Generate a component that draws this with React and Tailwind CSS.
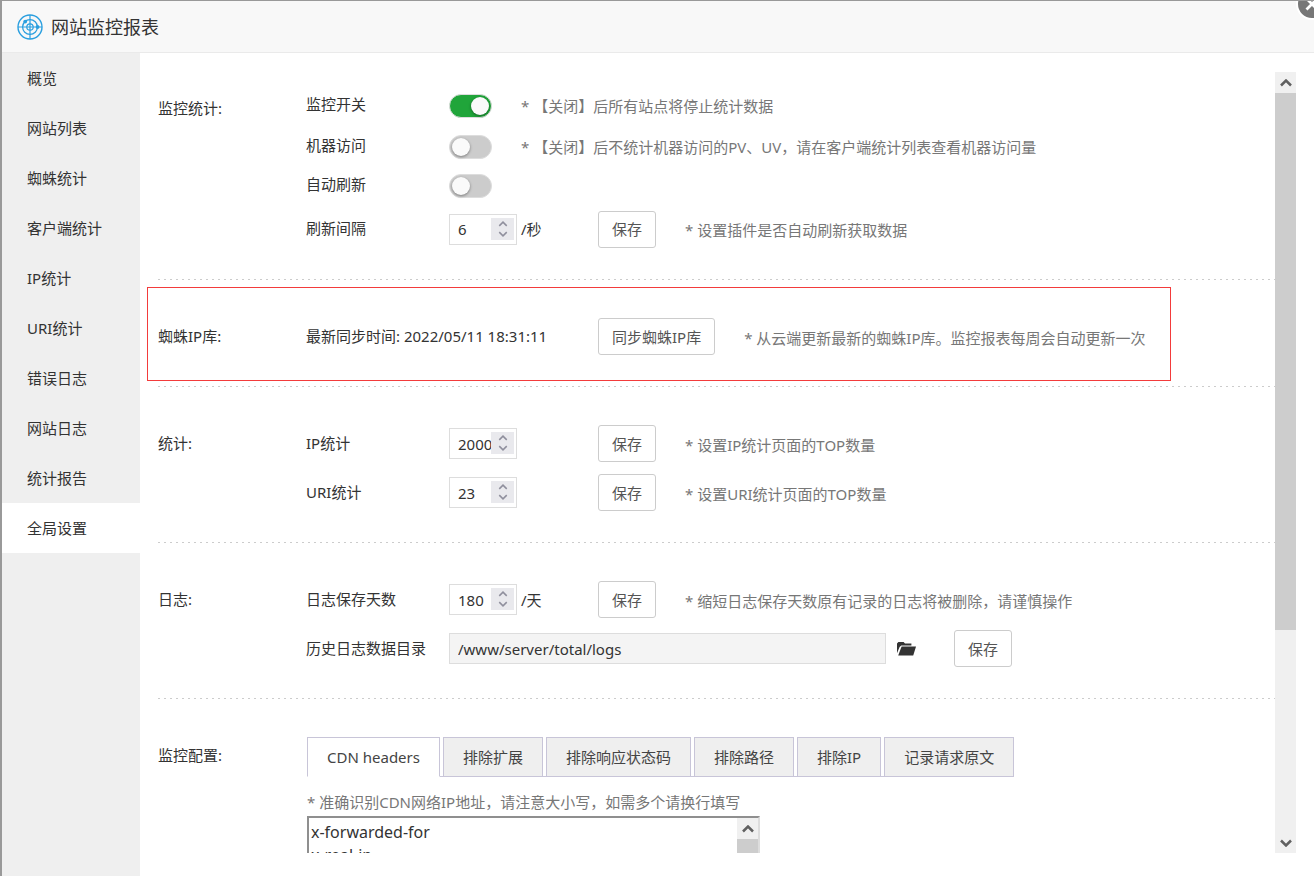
import React, { useState } from 'react';

const menu = [
  '概览',
  '网站列表',
  '蜘蛛统计',
  '客户端统计',
  'IP统计',
  'URI统计',
  '错误日志',
  '网站日志',
  '统计报告',
  '全局设置',
];

const tabs = ['CDN headers', '排除扩展', '排除响应状态码', '排除路径', '排除IP', '记录请求原文'];

function Logo() {
  return (
    <svg viewBox="0 0 26 26" className="h-[26px] w-[26px]" fill="none" stroke="#2a9fdf" aria-hidden="true">
      <circle cx="13" cy="13" r="12" strokeWidth="1.4" />
      <circle cx="13" cy="13" r="7.4" strokeWidth="1.3" />
      <circle cx="13" cy="13" r="3.2" strokeWidth="1.2" />
      <path d="M13 1v24M1 13h24" strokeWidth="1.2" />
      <circle cx="8.2" cy="7.6" r="1.9" fill="#2a9fdf" stroke="none" />
      <circle cx="20.6" cy="13" r="1.9" fill="#2a9fdf" stroke="none" />
    </svg>
  );
}

function Chevron({ down, className }) {
  return (
    <svg viewBox="0 0 12 8" className={className} fill="none" stroke="currentColor" aria-hidden="true">
      <path d={down ? 'M1 1.5 6 6.5 11 1.5' : 'M1 6.5 6 1.5 11 6.5'} />
    </svg>
  );
}

function FolderIcon() {
  return (
    <svg viewBox="0 0 19 16" className="h-4 w-[19px]" fill="#333" aria-hidden="true">
      <path d="M0 12.2V2.6L1.4 1h5.2L8 2.6h6.4V4.4H4.2L2.6 6z" />
      <path d="M4.6 5.4H19l-2.8 9.2H1.2z" />
    </svg>
  );
}

function Row({ id, label, className = 'h-[49px]', children }) {
  return (
    <div className={`flex items-center ${className}`}>
      <label htmlFor={id} className="w-[143px] shrink-0 pb-[2px]">
        {label}
      </label>
      {children}
    </div>
  );
}

function Section({ title, className = 'pt-8 pb-[25px]', children }) {
  return (
    <section className={`relative flex ${className}`}>
      <h2 className="flex h-[49px] w-[148px] shrink-0 items-center pb-[2px]">{title}</h2>
      <div className="min-w-0 flex-1">{children}</div>
    </section>
  );
}

function Divider() {
  return (
    <hr className="h-px border-0 bg-[repeating-linear-gradient(to_right,#ccc_0_2px,transparent_2px_6px)]" />
  );
}

function Hint({ children }) {
  return <p className="ml-[29px] pt-[2px] whitespace-nowrap text-[#777]">{children}</p>;
}

function Button({ children }) {
  return (
    <button
      type="button"
      className="h-[37px] shrink-0 rounded-[3px] border border-[#ccc] bg-white px-[13px] whitespace-nowrap text-[#555] hover:bg-gray-50"
    >
      {children}
    </button>
  );
}

function Toggle({ id, defaultChecked }) {
  return (
    <span className="relative mt-[2px] h-6 w-[43px] shrink-0">
      <input
        id={id}
        type="checkbox"
        role="switch"
        defaultChecked={defaultChecked}
        className="peer h-6 w-[43px] cursor-pointer appearance-none rounded-full border border-[#ddd] bg-[#ccc] checked:bg-[#20a53a]"
      />
      <span className="pointer-events-none absolute top-[3px] left-[3px] h-[18px] w-[18px] rounded-full bg-[#fafafa] shadow-[0_1px_3px_rgba(0,0,0,0.4)] peer-checked:left-[22px]" />
    </span>
  );
}

function NumberField({ id, value, unit }) {
  const [num, setNum] = useState(value);

  return (
    <div className="flex w-[149px] shrink-0 items-center">
      <span className="relative mr-1 h-[31px] w-[68px]">
        <input
          id={id}
          type="number"
          value={num}
          onChange={(e) => setNum(Number(e.target.value))}
          className="h-[31px] w-[68px] border border-[#ddd] bg-white pr-6 pl-2 [appearance:textfield] [&::-webkit-inner-spin-button]:m-0 [&::-webkit-inner-spin-button]:appearance-none"
        />
        <span className="absolute top-1 right-[3px] flex h-[22px] w-[23px] flex-col justify-between bg-[#e9e9ed] py-[3px] text-[#8f8f9d]">
          <button type="button" aria-label="增加" onClick={() => setNum(num + 1)} className="flex justify-center">
            <Chevron className="h-[6px] w-[10px] stroke-2" />
          </button>
          <button type="button" aria-label="减少" onClick={() => setNum(num - 1)} className="flex justify-center">
            <Chevron down className="h-[6px] w-[10px] stroke-2" />
          </button>
        </span>
      </span>
      {unit}
    </div>
  );
}

function ConfigTabs() {
  const [active, setActive] = useState(0);

  return (
    <>
      <div role="tablist" className="inline-flex gap-[3px] border-b border-[#c8c5d8]">
        {tabs.map((tab, i) => (
          <button
            key={tab}
            type="button"
            role="tab"
            aria-selected={i === active}
            onClick={() => setActive(i)}
            className={`-mb-px h-10 border px-[19px] whitespace-nowrap text-[#444] ${
              i === active
                ? 'border-[#c8c5d8] border-b-white bg-white'
                : 'border-[#c8c5d8] bg-[#efefef]'
            }`}
          >
            {tab}
          </button>
        ))}
      </div>
      <label htmlFor="headers" className="mt-[14px] block text-[#777]">
        * 准确识别CDN网络IP地址，请注意大小写，如需多个请换行填写
      </label>
      <div className="mt-[3px] flex h-[180px] w-[453px] border-2 border-[#ddd] border-t-[#8f8f8f] border-l-[#8f8f8f]">
        <textarea
          id="headers"
          defaultValue={'x-forwarded-for\nx-real-ip\nx-forwarded\nforwarded-for\nforwarded\ntrue-client-ip'}
          className="flex-1 resize-none px-[2px] pt-[3px] text-base leading-[23px] text-[#333] outline-none [scrollbar-width:none]"
        />
        <div className="w-[21px] bg-[#f0f0f0] text-[#606060]" aria-hidden="true">
          <div className="flex h-[21px] items-center justify-center">
            <Chevron className="h-2 w-3 stroke-[2.5]" />
          </div>
          <div className="h-16 bg-[#cdcdcd]" />
        </div>
      </div>
    </>
  );
}

function ScrollBar() {
  return (
    <div className="flex w-[21px] shrink-0 flex-col bg-[#f0f0f0] text-[#606060]" aria-hidden="true">
      <div className="flex h-[21px] items-center justify-center">
        <Chevron className="h-2 w-3 stroke-[2.5]" />
      </div>
      <div className="flex-1">
        <div className="h-8/11 bg-[#cdcdcd]" />
      </div>
      <div className="flex h-[21px] items-center justify-center">
        <Chevron down className="h-2 w-3 stroke-[2.5]" />
      </div>
    </div>
  );
}

export default function App() {
  const [page, setPage] = useState('全局设置');

  return (
    <div className="relative flex h-screen flex-col overflow-hidden border-t border-l-2 border-[#999] bg-white font-['Noto_Sans','Noto_Sans_CJK_SC',sans-serif] text-[15px] leading-[22px] text-[#333]">
      <header className="flex h-[52px] shrink-0 items-center gap-2 border-b border-[#eaeaea] bg-[#f8f8f8] px-[15px]">
        <Logo />
        <h1 className="text-lg">网站监控报表</h1>
      </header>
      <button
        type="button"
        aria-label="关闭"
        className="absolute -top-[13px] -right-[14px] flex h-8 w-8 items-center justify-center rounded-full border-2 border-white bg-[#777] text-white"
      >
        <svg viewBox="0 0 14 14" className="h-[14px] w-[14px]" fill="none" stroke="currentColor" aria-hidden="true">
          <path d="M1.5 1.5l11 11M12.5 1.5l-11 11" strokeWidth="2.8" />
        </svg>
      </button>

      <div className="flex min-h-0 flex-1">
        <nav className="w-[138px] shrink-0 bg-[#efefef]">
          {menu.map((item) => (
            <a
              key={item}
              href="#"
              onClick={() => setPage(item)}
              className={`flex h-[50px] items-center pl-[25px] ${item === page ? 'bg-white' : ''}`}
            >
              {item}
            </a>
          ))}
        </nav>

        <main className="flex min-w-0 flex-1 pt-[19px] pr-[18px] pb-[23px]">
          <div className="min-w-0 flex-1 overflow-x-hidden overflow-y-auto pl-[18px] [scrollbar-width:none]">
            <Section title="监控统计:" className="pt-3 pb-6">
              <Row id="monitor" label="监控开关" className="h-[41px]">
                <Toggle id="monitor" defaultChecked />
                <Hint>* 【关闭】后所有站点将停止统计数据</Hint>
              </Row>
              <Row id="machine" label="机器访问" className="h-[41px]">
                <Toggle id="machine" />
                <Hint>* 【关闭】后不统计机器访问的PV、UV，请在客户端统计列表查看机器访问量</Hint>
              </Row>
              <Row id="refresh" label="自动刷新" className="h-[37px]">
                <Toggle id="refresh" />
              </Row>
              <Row id="interval" label="刷新间隔" className="h-[52px]">
                <NumberField id="interval" value={6} unit="/秒" />
                <Button>保存</Button>
                <Hint>* 设置插件是否自动刷新获取数据</Hint>
              </Row>
            </Section>
            <Divider />

            <Section title="蜘蛛IP库:">
              <div className="flex h-[49px] items-center">
                <p className="w-[292px] shrink-0 pb-[2px]">最新同步时间: 2022/05/11 18:31:11</p>
                <Button>同步蜘蛛IP库</Button>
                <Hint>* 从云端更新最新的蜘蛛IP库。监控报表每周会自动更新一次</Hint>
              </div>
              <div className="pointer-events-none absolute top-[7px] right-[104px] bottom-[5px] -left-[11px] border border-[#f33b3b]" />
            </Section>
            <Divider />

            <Section title="统计:">
              <Row id="ip-top" label="IP统计">
                <NumberField id="ip-top" value={2000} />
                <Button>保存</Button>
                <Hint>* 设置IP统计页面的TOP数量</Hint>
              </Row>
              <Row id="uri-top" label="URI统计">
                <NumberField id="uri-top" value={23} />
                <Button>保存</Button>
                <Hint>* 设置URI统计页面的TOP数量</Hint>
              </Row>
            </Section>
            <Divider />

            <Section title="日志:">
              <Row id="days" label="日志保存天数">
                <NumberField id="days" value={180} unit="/天" />
                <Button>保存</Button>
                <Hint>* 缩短日志保存天数原有记录的日志将被删除，请谨慎操作</Hint>
              </Row>
              <Row id="log-dir" label="历史日志数据目录">
                <input
                  id="log-dir"
                  readOnly
                  value="/www/server/total/logs"
                  className="h-[31px] w-[437px] border border-[#ddd] bg-[#f4f4f4] px-2"
                />
                <button type="button" aria-label="选择目录" className="mr-[38px] ml-[11px]">
                  <FolderIcon />
                </button>
                <Button>保存</Button>
              </Row>
            </Section>
            <Divider />

            <section className="flex pt-[38px] pb-8">
              <h2 className="flex h-[37px] w-[149px] shrink-0 items-center pb-[2px]">监控配置:</h2>
              <div className="min-w-0 flex-1">
                <ConfigTabs />
              </div>
            </section>
          </div>
          <ScrollBar />
        </main>
      </div>
    </div>
  );
}
